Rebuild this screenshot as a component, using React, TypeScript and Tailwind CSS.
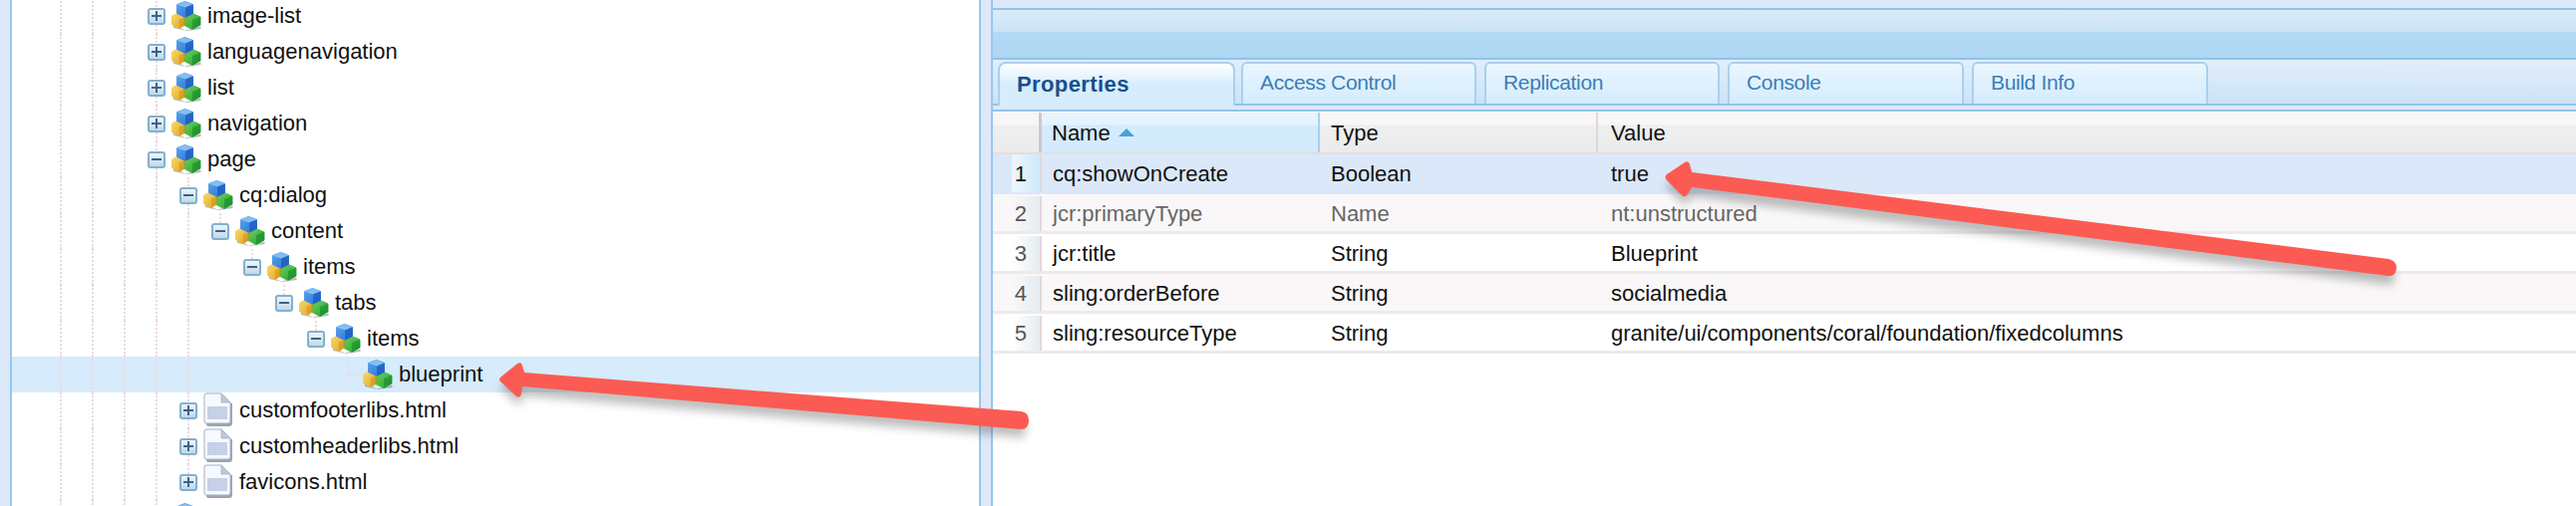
type TreeRow = {
  label: string;
  lines: number[];
  col: number;
  cont?: boolean;
  kind: "plus" | "minus" | "none";
  icon: "node" | "file";
  selected?: boolean;
};

const COLS = [0, 1, 2, 3, 4, 5, 6, 7, 8, 9];

const rows: TreeRow[] = [
  { label: "image-list", lines: [0, 1, 2], col: 3, cont: true, kind: "plus", icon: "node" },
  { label: "languagenavigation", lines: [0, 1, 2], col: 3, cont: true, kind: "plus", icon: "node" },
  { label: "list", lines: [0, 1, 2], col: 3, cont: true, kind: "plus", icon: "node" },
  { label: "navigation", lines: [0, 1, 2], col: 3, cont: true, kind: "plus", icon: "node" },
  { label: "page", lines: [0, 1, 2], col: 3, cont: true, kind: "minus", icon: "node" },
  { label: "cq:dialog", lines: [0, 1, 2, 3], col: 4, cont: true, kind: "minus", icon: "node" },
  { label: "content", lines: [0, 1, 2, 3, 4], col: 5, kind: "minus", icon: "node" },
  { label: "items", lines: [0, 1, 2, 3, 4], col: 6, kind: "minus", icon: "node" },
  { label: "tabs", lines: [0, 1, 2, 3, 4], col: 7, kind: "minus", icon: "node" },
  { label: "items", lines: [0, 1, 2, 3, 4], col: 8, kind: "minus", icon: "node" },
  { label: "blueprint", lines: [0, 1, 2, 3, 4], col: 9, kind: "none", icon: "node", selected: true },
  { label: "customfooterlibs.html", lines: [0, 1, 2, 3], col: 4, cont: true, kind: "plus", icon: "file" },
  { label: "customheaderlibs.html", lines: [0, 1, 2, 3], col: 4, cont: true, kind: "plus", icon: "file" },
  { label: "favicons.html", lines: [0, 1, 2, 3], col: 4, kind: "plus", icon: "file" },
  { label: "", lines: [0, 1, 2], col: 3, cont: true, kind: "plus", icon: "node" },
];

const props = [
  { name: "cq:showOnCreate", type: "Boolean", value: "true", row: "bg-[#dbe8f9]", gutter: "from-[#eef7fd] to-[#cfe8fa]", text: "text-[#111111]" },
  { name: "jcr:primaryType", type: "Name", value: "nt:unstructured", row: "bg-[#f9f7f8]", gutter: "from-[#f9f7f8] to-[#e6ecf0]", text: "text-[#666666]" },
  { name: "jcr:title", type: "String", value: "Blueprint", row: "bg-white", gutter: "from-white to-[#e6ecf0]", text: "text-[#111111]" },
  { name: "sling:orderBefore", type: "String", value: "socialmedia", row: "bg-[#f9f7f8]", gutter: "from-[#f9f7f8] to-[#e6ecf0]", text: "text-[#111111]" },
  { name: "sling:resourceType", type: "String", value: "granite/ui/components/coral/foundation/fixedcolumns", row: "bg-white", gutter: "from-white to-[#e6ecf0]", text: "text-[#111111]" },
];

const tabs = [
  { label: "Access Control", width: "w-[236px]" },
  { label: "Replication", width: "w-[236px]" },
  { label: "Console", width: "w-[237px]" },
  { label: "Build Info", width: "w-[237px]" },
];

function NodeIcon() {
  return (
    <svg width="30" height="30" viewBox="0 0 30 30" className="shrink-0">
      <defs>
        <linearGradient id="cube-blue" x1="0" y1="0" x2="1" y2="1">
          <stop offset="0" stopColor="#5ba6ee" />
          <stop offset="1" stopColor="#2a6fd6" />
        </linearGradient>
        <linearGradient id="cube-yellow" x1="0" y1="0" x2="1" y2="1">
          <stop offset="0" stopColor="#f8dc6c" />
          <stop offset="1" stopColor="#e0a11f" />
        </linearGradient>
        <linearGradient id="cube-green" x1="0" y1="0" x2="1" y2="1">
          <stop offset="0" stopColor="#6ed458" />
          <stop offset="1" stopColor="#229e32" />
        </linearGradient>
      </defs>
      <path d="M2 24 L14 29.5 L29.5 25.5 L29.5 28 L15 30 L2 27 Z" fill="#6f767c" opacity="0.5" />
      <path d="M0.5 15 L7.5 11.5 L15 15 L15 23 L8 27.5 L0.5 23.5 Z" fill="url(#cube-yellow)" stroke="url(#cube-yellow)" strokeLinejoin="round" />
      <path d="M13 16 L21 12.5 L29 16 L29 24 L21 28.5 L13 24.5 Z" fill="url(#cube-green)" stroke="url(#cube-green)" strokeLinejoin="round" />
      <path d="M5.5 3.5 L13.5 0.5 L21.5 3.5 L21.5 12.5 L14 16.5 L5.5 12.5 Z" fill="url(#cube-blue)" stroke="url(#cube-blue)" strokeLinejoin="round" />
      <path d="M5.5 3.5 L13.5 0.5 L21.5 3.5 L14 6.5 Z" fill="#82c0f4" />
      <path d="M14 6.5 L21.5 3.5 L21.5 12.5 L14 16.5 Z" fill="#1b58ba" opacity="0.7" />
      <path d="M21 19 L29 16 L29 24 L21 28.5 Z" fill="#14852a" opacity="0.55" />
      <path d="M7.5 18.5 L15 15.5 L15 23 L8 27.5 Z" fill="#c98a12" opacity="0.45" />
    </svg>
  );
}

function FileIcon() {
  return (
    <svg width="30" height="34" viewBox="0 0 30 34" className="shrink-0 -mt-[2px]">
      <path d="M3 5 L3 32 Q3 34 5 34 L26 34 Q29 34 29 31 L29 11 Z" fill="#6f7e8e" opacity="0.7" />
      <path d="M1 3 Q1 1 3 1 L18 1 L27 10 L27 29 Q27 31 25 31 L3 31 Q1 31 1 29 Z" fill="#f6f9fd" stroke="#a3b3c4" strokeWidth="1" />
      <path d="M18 1 L18 10 L27 10 Z" fill="#bcc9dd" stroke="#a3b3c4" strokeWidth="0.8" />
      <rect x="4" y="14" width="20" height="13" fill="#c6d0e6" />
    </svg>
  );
}

function Expander({ kind }: { kind: "plus" | "minus" }) {
  return (
    <span className="relative flex h-[17px] w-[18px] items-center justify-center rounded-[3px] border-2 border-[#82b0cd] bg-gradient-to-b from-[#eef5fa] to-[#bfd8ea]">
      <span className="absolute h-[2px] w-[10px] bg-[#3f6286]" />
      {kind === "plus" && <span className="absolute h-[10px] w-[2px] bg-[#3f6286]" />}
    </span>
  );
}

function GuideCell({ row, col }: { row: TreeRow; col: number }) {
  const full = row.lines.includes(col);
  const isElbow = row.col === col;
  return (
    <div className="relative h-full w-[32px] shrink-0">
      {full && <div className="absolute top-0 bottom-0 left-[15px] border-l-2 border-dotted border-[#ecdade]" />}
      {isElbow && (
        <div
          className={
            row.cont
              ? "absolute top-0 bottom-0 left-[15px] border-l-2 border-dotted border-[#ecdade]"
              : "absolute top-0 h-[18px] left-[15px] border-l-2 border-dotted border-[#ecdade]"
          }
        />
      )}
      {isElbow && row.kind === "none" && (
        <div className="absolute top-[17px] left-[15px] w-[17px] border-t-2 border-dotted border-[#ecdade]" />
      )}
      {isElbow && row.kind !== "none" && (
        <div className="absolute inset-0 flex items-center justify-center">
          <Expander kind={row.kind} />
        </div>
      )}
    </div>
  );
}

function Tree() {
  return (
    <div className="-mt-[2px] flex flex-col">
      {rows.map((row, i) => (
        <div key={i} className={row.selected ? "flex h-[36px] shrink-0 items-center bg-[#d6ebfb] pl-[33px]" : "flex h-[36px] shrink-0 items-center pl-[33px]"}>
          {COLS.filter((c) => c <= row.col).map((c) => (
            <GuideCell key={c} row={row} col={c} />
          ))}
          <div className="-ml-[1px]">{row.icon === "node" ? <NodeIcon /> : <FileIcon />}</div>
          <span className="ml-[6px] text-[22px] leading-none text-[#111111]">{row.label}</span>
        </div>
      ))}
    </div>
  );
}

function PropertiesPanel() {
  return (
    <div className="flex min-w-0 flex-1 flex-col">
      <div className="h-[8px] shrink-0 bg-[#dce9f9]" />
      <div className="flex h-[52px] shrink-0 flex-col border-y-2 border-[#8fc3ea]">
        <div className="h-[22px] bg-gradient-to-b from-[#dbeafa] to-[#cbe3f7]" />
        <div className="flex-1 bg-gradient-to-b from-[#b3daf5] to-[#add6f3]" />
      </div>
      <div className="flex h-[46px] shrink-0 items-end gap-[8px] border-b-2 border-[#8fc3ea] bg-gradient-to-b from-[#e2eefb] to-[#cbe3f7] pl-[5px]">
        <div className="relative -mr-[2px] -mb-[2px] flex h-[44px] w-[238px] items-center rounded-t-[8px] border-x-2 border-t-2 border-[#a9d0ee] bg-[linear-gradient(#ffffff,#d6edfe_50%,#d6edfe)] pb-[2px] pl-[17px] text-[22px] font-bold tracking-[0.4px] text-[#15508f]">
          Properties
        </div>
        {tabs.map((tab) => (
          <div
            key={tab.label}
            className={`flex h-[42px] ${tab.width} items-center rounded-t-[6px] border-x-2 border-t-2 border-[#a9d0ee] bg-gradient-to-b from-[#eaf6fe] to-[#d3ecfe] pb-[2px] pl-[17px] text-[21px] tracking-[-0.35px] text-[#3c7db6]`}
          >
            {tab.label}
          </div>
        ))}
      </div>
      <div className="h-[6px] shrink-0 border-b-2 border-[#8fc3ea] bg-[#dbe9f9]" />
      <div className="flex h-[43px] shrink-0 border-t border-b-2 border-t-white border-b-[#e8dcdf] bg-[linear-gradient(#f8f6f7,#f8f6f7_30%,#efefef_32%,#ebebeb)] text-[22px] text-[#111111]">
        <div className="w-[49px] shrink-0 border-r-[3px] border-[#d3c5ca]" />
        <div className="flex w-[279px] shrink-0 items-center gap-[8px] border-r-2 border-[#a8d2f0] bg-[linear-gradient(#e8f5fe,#e4f3fd_30%,#d4ebfc_32%,#d3ebfc)] pl-[10px]">
          Name
          <span className="h-0 w-0 border-x-[8px] border-b-[8px] border-x-transparent border-b-[#4c9fd9]" />
        </div>
        <div className="flex w-[279px] shrink-0 items-center border-r-2 border-[#e0d6d8] pl-[11px]">Type</div>
        <div className="flex flex-1 items-center pl-[13px]">Value</div>
      </div>
      {props.map((p, i) => (
        <div key={p.name} className={`flex h-[40px] shrink-0 items-stretch ${p.row} ${i === 0 ? "pb-[2px]" : "border-b-[3px] border-[#eee9eb] pt-[2px]"} text-[22px] ${p.text}`}>
          <div className="flex w-[49px] shrink-0 items-stretch border-r-[2px] border-[#e2d8da] pl-[19px]">
            <div className={`flex flex-1 items-center justify-end bg-gradient-to-r pr-[13px] ${p.gutter} ${i === 0 ? "" : "text-[#555555]"}`}>{i + 1}</div>
          </div>
          <div className="flex w-[279px] shrink-0 items-center pl-[11px]">{p.name}</div>
          <div className="flex w-[279px] shrink-0 items-center pl-[11px]">{p.type}</div>
          <div className="flex flex-1 items-center pl-[13px]">{p.value}</div>
        </div>
      ))}
    </div>
  );
}

function Arrows() {
  return (
    <svg width="2584" height="508" viewBox="0 0 2584 508" className="pointer-events-none absolute inset-0">
      <defs>
        <filter id="arrow-shadow" x="-10%" y="-50%" width="120%" height="200%">
          <feGaussianBlur stdDeviation="5" />
        </filter>
      </defs>
      <g filter="url(#arrow-shadow)" fill="#5a5a5a" opacity="0.4" transform="translate(0 9)">
        <path d="M501 380 L523 364 L526 374 L1026 413 Q1032 422 1026 430 L524 388 L522 399 Z" />
        <path d="M1670 177 L1694 162 L1697 173 L2398 260 Q2406 268 2399 277 L1697 188 L1690 197 Z" />
      </g>
      <path
        d="M503 378 L519 365 Q523 363 524 367 L526 374 L1024 413 Q1032 414 1032 422 Q1032 431 1024 431 L524 388 L523 395 Q522 400 518 398 L503 384 Q499 381 503 378 Z"
        fill="#fb5b52"
      />
      <path
        d="M1672 175 L1690 163 Q1694 161 1695 165 L1697 173 L2396 260 Q2404 262 2404 269 Q2403 278 2396 277 L1697 188 L1693 195 Q1690 199 1687 196 L1672 181 Q1669 178 1672 175 Z"
        fill="#fb5b52"
      />
    </svg>
  );
}

export default function App() {
  return (
    <div className="relative flex h-[508px] w-[2584px] overflow-hidden bg-[#dce9f9] font-['Liberation_Sans',Arial,sans-serif]">
      <div className="w-[10px] shrink-0" />
      <div className="h-full w-[974px] shrink-0 overflow-hidden border-x-2 border-[#98c7ec] bg-white">
        <Tree />
      </div>
      <div className="w-[10px] shrink-0" />
      <div className="flex min-w-0 flex-1 flex-col border-l-2 border-[#98c7ec] bg-white">
        <PropertiesPanel />
      </div>
      <Arrows />
    </div>
  );
}
